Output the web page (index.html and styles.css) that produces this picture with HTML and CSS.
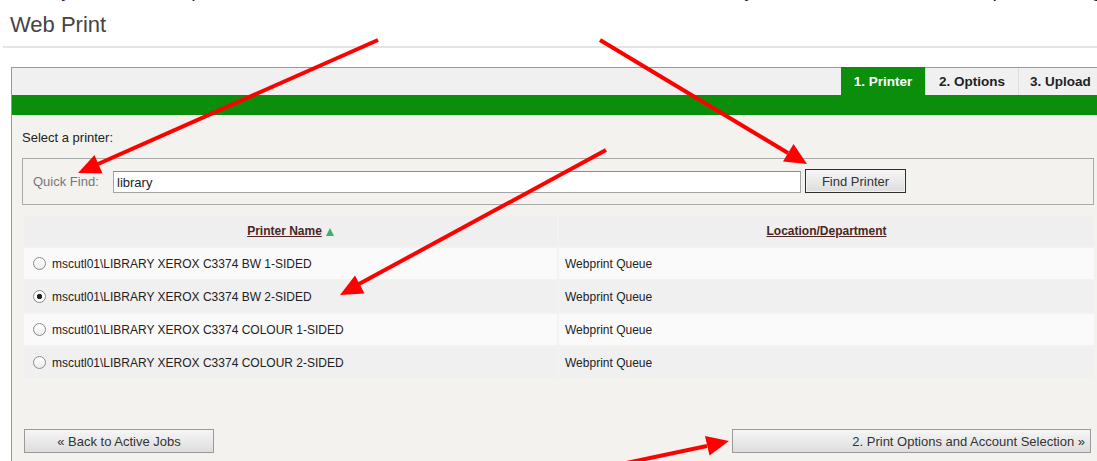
FILE: index.html
```html
<!DOCTYPE html>
<html lang="en">
<head>
<meta charset="utf-8">
<title>Web Print</title>
<link rel="stylesheet" href="styles.css">
</head>
<body>
<div class="page">
  <div class="intro-tail"><span>Then you should be presented with the list of all of the Web Print machines. Select your chosen Xerox network printer using</span></div>

  <header class="page-head">
    <h1 class="page-title">Web Print</h1>
  </header>

  <section class="panel">
    <nav class="steps">
      <span class="step is-current">1. Printer</span>
      <span class="step">2. Options</span>
      <span class="step step-last">3. Upload</span>
    </nav>
    <div class="step-bar"></div>

    <div class="panel-body">
      <p class="lead">Select a printer:</p>

      <div class="finder">
        <label class="finder-label" for="quick-find">Quick Find:</label>
        <input id="quick-find" class="finder-input" type="text" value="library">
        <button class="btn btn-find" type="button">Find Printer</button>
      </div>

      <table class="printers">
        <thead>
          <tr>
            <th class="col-name"><a class="sort-link">Printer Name</a><span class="sort-up"></span></th>
            <th class="col-loc"><a class="sort-link">Location/Department</a></th>
          </tr>
        </thead>
        <tbody>
          <tr>
            <td><label class="pick"><input type="radio" name="printer">mscutl01\LIBRARY XEROX C3374 BW 1-SIDED</label></td>
            <td>Webprint Queue</td>
          </tr>
          <tr>
            <td><label class="pick"><input type="radio" name="printer" checked>mscutl01\LIBRARY XEROX C3374 BW 2-SIDED</label></td>
            <td>Webprint Queue</td>
          </tr>
          <tr>
            <td><label class="pick"><input type="radio" name="printer">mscutl01\LIBRARY XEROX C3374 COLOUR 1-SIDED</label></td>
            <td>Webprint Queue</td>
          </tr>
          <tr>
            <td><label class="pick"><input type="radio" name="printer">mscutl01\LIBRARY XEROX C3374 COLOUR 2-SIDED</label></td>
            <td>Webprint Queue</td>
          </tr>
        </tbody>
      </table>

      <div class="actions">
        <button class="btn btn-back" type="button">« Back to Active Jobs</button>
        <button class="btn btn-next" type="button">2. Print Options and Account Selection »</button>
      </div>
    </div>
  </section>

  <!-- red guide arrows drawn on top of the form -->
  <svg class="callouts" width="1097" height="461" viewBox="0 0 1097 461">
    <g stroke="#ff0000" stroke-width="4" stroke-linecap="butt" fill="none">
      <line x1="378" y1="40" x2="98" y2="164"/>
      <line x1="600" y1="40" x2="788" y2="153"/>
      <line x1="606" y1="150" x2="359" y2="284"/>
      <line x1="612" y1="466" x2="707" y2="446"/>
    </g>
    <g fill="#ff0000">
      <polygon points="78,173 102.5,173.5 94.5,155"/>
      <polygon points="807,164 783,161.5 793.5,144"/>
      <polygon points="340,295 364.5,293.5 355,275.5"/>
      <polygon points="729,441 709.5,455.5 705,436"/>
    </g>
  </svg>
</div>
</body>
</html>
```

FILE: styles.css
```css
* {
  box-sizing: border-box;
}

html,
body {
  margin: 0;
  padding: 0;
}

body {
  width: 1097px;
  height: 461px;
  overflow: hidden;
  background: #ffffff;
  font-family: "Liberation Sans", Arial, Helvetica, sans-serif;
  color: #222222;
}

.page {
  position: relative;
  width: 1097px;
  height: 461px;
  overflow: hidden;
}

/* last line of the paragraph above, scrolled out of view: only descenders remain */
.intro-tail {
  height: 8px;
  overflow: hidden;
  font-size: 20px;
  line-height: 22px;
  white-space: nowrap;
  color: #222222;
}

.intro-tail span {
  display: block;
  margin-top: -21px;
  padding-left: 10px;
}

.page-head {
  margin-left: 3px;
  padding: 4px 0 8px 7px;
  border-bottom: 2px solid #e4e4e4;
}

.page-title {
  margin: 0;
  font-size: 22px;
  line-height: 26px;
  font-weight: normal;
  color: #444444;
}

.panel {
  margin: 19px 0 0 11px;
  width: 1100px;
  height: 400px;
  border-left: 1px solid #999999;
  border-top: 1px solid #999999;
  display: flex;
  flex-direction: column;
}

.steps {
  height: 27px;
  background: #f0f0f0;
  display: flex;
  justify-content: flex-end;
  padding-right: 9px;
}

.step {
  width: 93px;
  display: flex;
  align-items: center;
  justify-content: center;
  font-size: 13.5px;
  font-weight: bold;
  color: #222222;
  border-left: 1px solid #dddddd;
}

.step.step-last {
  width: 84px;
}

.step.is-current {
  width: 84px;
  margin-top: -1px;
  background: #0b8e0b;
  color: #ffffff;
  border-left: none;
}

.step-bar {
  height: 20px;
  background: #0b8e0b;
}

.panel-body {
  flex: 1;
  background: #f3f2ee;
  padding: 15px 0 0 10px;
}

.lead {
  margin: 0;
  font-size: 13px;
  line-height: 15px;
  color: #222222;
}

.finder {
  margin-top: 13px;
  width: 1072px;
  height: 47px;
  border: 1px solid #aaaaaa;
  display: flex;
  align-items: center;
  padding-left: 10px;
}

.finder-label {
  width: 80px;
  font-size: 13px;
  color: #777777;
}

.finder-input {
  width: 688px;
  height: 22px;
  margin: 1px 4px 0 0;
  padding: 0 3px;
  border: 1px solid #a4a4a4;
  border-top-color: #8a8a8a;
  background: #ffffff;
  font-family: inherit;
  font-size: 13px;
  color: #222222;
  outline: none;
}

.btn {
  font-family: inherit;
  font-size: 13px;
  color: #333333;
  background: linear-gradient(#f6f6f6, #dddddd);
  border: 1px solid #9a9a9a;
  height: 24px;
  padding: 0;
  cursor: pointer;
}

.btn-find {
  width: 101px;
  margin-top: -1px;
  border: 1px solid #2e2e2e;
  box-shadow: inset 0 0 0 1px #f4f4f4;
}

.printers {
  margin-top: 9px;
  width: 1074px;
  border-collapse: separate;
  border-spacing: 2px;
  font-size: 12px;
}

.printers th {
  height: 30px;
  padding: 0;
  background: #efefef;
  font-weight: bold;
  text-align: center;
}

.printers .col-name {
  width: 533px;
}

.sort-link {
  color: #4a2626;
  text-decoration: underline;
}

.sort-up {
  display: inline-block;
  width: 0;
  height: 0;
  margin-left: 4px;
  border-left: 4.5px solid transparent;
  border-right: 4.5px solid transparent;
  border-bottom: 8px solid #3dae6c;
  vertical-align: -1px;
}

.printers td {
  height: 31px;
  padding: 0 6px;
  color: #222222;
}

.printers tbody tr:nth-child(odd) td {
  background: #fafafa;
}

.printers tbody tr:nth-child(even) td {
  background: #f0f0f0;
}

.printers td:first-child {
  padding-left: 9px;
}

.pick {
  display: flex;
  align-items: center;
}

.pick input {
  appearance: none;
  -webkit-appearance: none;
  width: 13px;
  height: 13px;
  margin: 0 6px 0 0;
  border: 1px solid #8c8c8c;
  border-radius: 50%;
  background: linear-gradient(#ffffff, #ececec);
}

.pick input:checked {
  background: radial-gradient(circle, #222222 0 2.4px, #ffffff 3px);
}

.actions {
  margin: 49px 0 0 2px;
  width: 1067px;
  display: flex;
  justify-content: space-between;
}

.btn-back {
  width: 190px;
}

.btn-next {
  width: 359px;
  text-align: right;
  padding-right: 5px;
}

.callouts {
  position: absolute;
  left: 0;
  top: 0;
  pointer-events: none;
}
```
